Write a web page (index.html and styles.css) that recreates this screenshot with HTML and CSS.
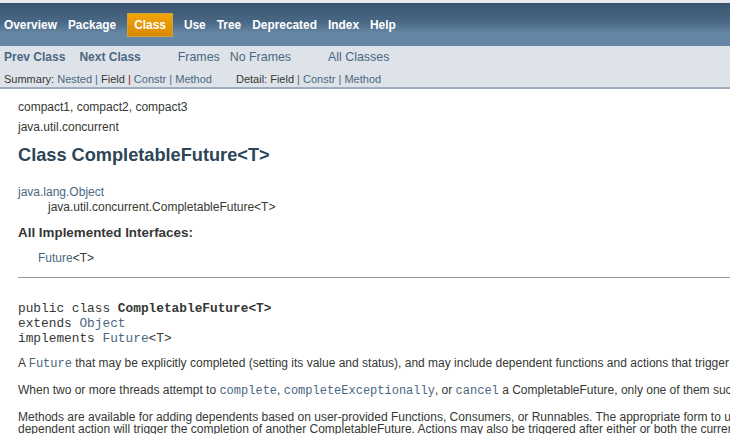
FILE: index.html
```html
<!DOCTYPE html>
<html>
<head>
<meta charset="utf-8">
<link rel="stylesheet" href="styles.css">
</head>
<body>
<div class="topstrip"></div>
<nav class="topNav">
  <a class="navItem" href="#">Overview</a>
  <a class="navItem" href="#">Package</a>
  <span class="navItem current">Class</span>
  <a class="navItem" href="#">Use</a>
  <a class="navItem" href="#">Tree</a>
  <a class="navItem" href="#">Deprecated</a>
  <a class="navItem" href="#">Index</a>
  <a class="navItem" href="#">Help</a>
</nav>
<div class="subNav">
  <div class="subRow1">
    <div class="grp">
      <a class="b" href="#">Prev Class</a>
      <a class="b" href="#">Next Class</a>
    </div>
    <div class="grp frames">
      <a href="#">Frames</a>
      <a href="#">No Frames</a>
    </div>
    <div class="grp">
      <a href="#">All Classes</a>
    </div>
  </div>
  <div class="subRow2">
    <div class="grp">
      <span class="lbl">Summary:&nbsp;</span><a href="#">Nested</a><span class="sep">&nbsp;|&nbsp;</span><span class="plain">Field</span><span class="sep red">&nbsp;|&nbsp;</span><a href="#">Constr</a><span class="sep">&nbsp;|&nbsp;</span><a href="#">Method</a>
    </div>
    <div class="grp">
      <span class="lbl">Detail:&nbsp;</span><span class="plain">Field</span><span class="sep">&nbsp;|&nbsp;</span><a href="#">Constr</a><span class="sep">&nbsp;|&nbsp;</span><a href="#">Method</a>
    </div>
  </div>
</div>
<main class="content">
  <div class="profile">compact1, compact2, compact3</div>
  <div class="pkg">java.util.concurrent</div>
  <h2 class="title">Class CompletableFuture&lt;T&gt;</h2>
  <div class="inherit">
    <a href="#">java.lang.Object</a>
    <div class="child">java.util.concurrent.CompletableFuture&lt;T&gt;</div>
  </div>
  <div class="ifaceTitle">All Implemented Interfaces:</div>
  <div class="iface"><a href="#">Future</a>&lt;T&gt;</div>
  <hr class="rule">
  <pre class="sig">public class <b>CompletableFuture&lt;T&gt;</b>
extends <a href="#">Object</a>
implements <a href="#">Future</a>&lt;T&gt;</pre>
  <p class="para first">A <code><a href="#">Future</a></code> that may be explicitly completed (setting its value and status), and may include dependent functions and actions that trigger upon its completion.</p>
  <p class="para">When two or more threads attempt to <code><a href="#">complete</a></code>, <code><a href="#">completeExceptionally</a></code>, or <code><a href="#">cancel</a></code> a CompletableFuture, only one of them succeeds.</p>
  <p class="para">Methods are available for adding dependents based on user-provided Functions, Consumers, or Runnables. The appropriate form to use depends on whether actions require arguments and/or produce results. Completion of a<br>dependent action will trigger the completion of another CompletableFuture. Actions may also be triggered after either or both the current and other CompletableFutures complete.</p>
</main>
</body>
</html>
```
FILE: styles.css
```css
html, body {
  margin: 0;
  padding: 0;
  background: #ffffff;
  color: #353833;
  font-family: "Liberation Sans", Arial, sans-serif;
  overflow: hidden;
}
a { text-decoration: none; color: #4a6782; }

.topstrip {
  height: 3px;
  background: #e6e9ee;
}
.topNav {
  height: 43px;
  background: linear-gradient(to bottom, #3a546d 0%, #4a6986 45%, #6585a4 70%, #6686a5 100%);
  display: flex;
  align-items: center;
  padding-left: 4px;
  gap: 11px;
  font-size: 11.9px;
  font-weight: bold;
  box-sizing: border-box;
}
.navItem { color: #ffffff; }
.current {
  background: linear-gradient(to bottom, #f2a50c, #d88800);
  border: 1px solid #c9a33c;
  padding: 4px 6px;
}
.subNav {
  background: #dee3e9;
  border-bottom: 2px solid #9eadc0;
  height: 41px;
  box-sizing: content-box;
  padding-left: 4px;
}
.subRow1 {
  display: flex;
  height: 18px;
  align-items: flex-end;
  font-size: 12.4px;
  gap: 37px;
}
.subRow1 .grp { display: flex; gap: 14px; align-items: baseline; }
.subRow1 .b { font-weight: bold; font-size: 12px; }
.subRow1 .frames { gap: 10px; }
.subRow2 {
  display: flex;
  font-size: 11px;
  gap: 24px;
  margin-top: 9px;
}
.lbl, .plain { color: #353833; }
.sep { color: #4a6782; }
.sep.red { color: #8b1f1f; }

.content {
  padding: 11px 0 0 18px;
}
.profile {
  font-size: 12px;
  height: 20px;
  line-height: 14px;
}
.pkg {
  font-size: 12px;
  line-height: 14px;
}
.title {
  font-size: 18.2px;
  color: #2c4557;
  margin: 10px 0 0 0;
  line-height: 22px;
}
.inherit {
  margin-top: 19px;
  font-size: 12px;
  line-height: 15px;
}
.child { padding-left: 30px; }
.ifaceTitle {
  font-size: 13.4px;
  font-weight: bold;
  margin-top: 10px;
  line-height: 16px;
}
.iface {
  font-size: 12px;
  margin: 10px 0 0 20px;
  line-height: 14px;
}
.rule {
  margin: 12px 0 0 0;
  border: 0;
  border-top: 1px solid #9a9a9a;
  height: 0;
}
.sig {
  font-family: "Liberation Mono", "Courier New", monospace;
  font-size: 12.8px;
  line-height: 15px;
  margin: 23px 0 0 0;
}
.para {
  font-size: 12px;
  line-height: 12px;
  margin: 14px 0 0 0;
  white-space: nowrap;
}
.para.first { margin-top: 11px; }
code {
  font-family: "Liberation Mono", "Courier New", monospace;
  font-size: 12px;
}
```
